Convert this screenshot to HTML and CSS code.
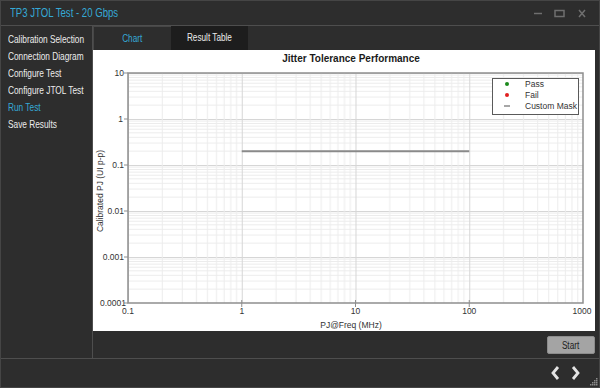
FILE: index.html
```html
<!DOCTYPE html>
<html lang="en">
<head>
    <meta charset="UTF-8">
    <title>TP3 JTOL Test - 20 Gbps</title>
    <link rel="stylesheet" href="styles.css">
</head>
<body>
    <div class="window">
        <div class="titlebar">
            <span class="title"><span class="narrow">TP3 JTOL Test - 20 Gbps</span></span>
            <svg class="win-controls" width="60" height="24" viewBox="0 0 60 24">
                <line x1="3" y1="12.5" x2="11" y2="12.5" stroke="#6f6f6f" stroke-width="1.5"/>
                <rect x="24" y="9.5" width="9" height="6" fill="none" stroke="#6f6f6f" stroke-width="1.5"/>
                <path d="M48 9 L54 16 M54 9 L48 16" stroke="#6f6f6f" stroke-width="1.5"/>
            </svg>
        </div>

        <div class="content">
            <nav class="sidebar">
                <div class="nav-item"><span class="narrow">Calibration Selection</span></div>
                <div class="nav-item"><span class="narrow">Connection Diagram</span></div>
                <div class="nav-item"><span class="narrow">Configure Test</span></div>
                <div class="nav-item"><span class="narrow">Configure JTOL Test</span></div>
                <div class="nav-item active"><span class="narrow">Run Test</span></div>
                <div class="nav-item"><span class="narrow">Save Results</span></div>
            </nav>

            <div class="main">
                <div class="tabs">
                    <div class="tab active"><span class="narrow">Chart</span></div>
                    <div class="tab"><span class="narrow">Result Table</span></div>
                </div>

                <div class="chart-panel">
                    <svg class="chart" width="502" height="281" viewBox="0 0 502 281">
                        <defs>
                            <pattern id="grid-x" x="35" y="0" width="113.75" height="281" patternUnits="userSpaceOnUse">
                                <g stroke="#ececec" stroke-width="1">
                                    <line x1="34.24" y1="0" x2="34.24" y2="281"/>
                                    <line x1="54.27" y1="0" x2="54.27" y2="281"/>
                                    <line x1="68.48" y1="0" x2="68.48" y2="281"/>
                                    <line x1="79.51" y1="0" x2="79.51" y2="281"/>
                                    <line x1="88.51" y1="0" x2="88.51" y2="281"/>
                                    <line x1="96.13" y1="0" x2="96.13" y2="281"/>
                                    <line x1="102.73" y1="0" x2="102.73" y2="281"/>
                                    <line x1="108.54" y1="0" x2="108.54" y2="281"/>
                                </g>
                                <line x1="0.5" y1="0" x2="0.5" y2="281" stroke="#d6d6d6"/>
                            </pattern>
                            <pattern id="grid-y" x="0" y="23" width="502" height="46" patternUnits="userSpaceOnUse">
                                <g stroke="#ececec" stroke-width="1">
                                    <line x1="0" y1="2.10" x2="502" y2="2.10"/>
                                    <line x1="0" y1="4.46" x2="502" y2="4.46"/>
                                    <line x1="0" y1="7.13" x2="502" y2="7.13"/>
                                    <line x1="0" y1="10.21" x2="502" y2="10.21"/>
                                    <line x1="0" y1="13.85" x2="502" y2="13.85"/>
                                    <line x1="0" y1="18.31" x2="502" y2="18.31"/>
                                    <line x1="0" y1="24.05" x2="502" y2="24.05"/>
                                    <line x1="0" y1="32.15" x2="502" y2="32.15"/>
                                </g>
                                <line x1="0" y1="0.5" x2="502" y2="0.5" stroke="#d6d6d6"/>
                            </pattern>
                        </defs>

                        <text class="chart-title" x="258" y="12" text-anchor="middle">Jitter Tolerance Performance</text>

                        <!-- grid -->
                        <rect x="35" y="23" width="455" height="230" fill="url(#grid-y)"/>
                        <rect x="35" y="23" width="455" height="230" fill="url(#grid-x)"/>

                        <!-- custom mask -->
                        <line x1="148.75" y1="101.2" x2="376.25" y2="101.2" stroke="#8a8a8a" stroke-width="2"/>

                        <rect x="35" y="23" width="455" height="230" fill="none" stroke="#8e8e8e" stroke-width="1.5"/>

                        <!-- ticks -->
                        <g stroke="#8e8e8e" stroke-width="1">
                            <line x1="31" y1="23" x2="35" y2="23"/>
                            <line x1="31" y1="69" x2="35" y2="69"/>
                            <line x1="31" y1="115" x2="35" y2="115"/>
                            <line x1="31" y1="161" x2="35" y2="161"/>
                            <line x1="31" y1="207" x2="35" y2="207"/>
                            <line x1="31" y1="253" x2="35" y2="253"/>
                            <line x1="148.75" y1="250" x2="148.75" y2="257"/>
                            <line x1="262.5" y1="250" x2="262.5" y2="257"/>
                            <line x1="376.25" y1="250" x2="376.25" y2="257"/>
                        </g>

                        <g class="tick-label" text-anchor="end">
                            <text x="31" y="23">10</text>
                            <text x="30" y="69">1</text>
                            <text x="31" y="115">0.1</text>
                            <text x="31" y="161">0.01</text>
                            <text x="31" y="207">0.001</text>
                            <text x="33" y="253">0.0001</text>
                        </g>
                        <g class="tick-label" text-anchor="middle">
                            <text x="35" y="261">0.1</text>
                            <text x="148.75" y="261">1</text>
                            <text x="262.5" y="261">10</text>
                            <text x="376.25" y="261">100</text>
                            <text x="489" y="261">1000</text>
                        </g>

                        <text class="axis-label" x="258" y="275" text-anchor="middle">PJ@Freq (MHz)</text>
                        <text class="axis-label" transform="translate(7,141) rotate(-90)" text-anchor="middle">Calibrated PJ (UI p-p)</text>

                        <!-- legend -->
                        <rect x="399.5" y="28.5" width="86" height="36" fill="#fff" stroke="#5a5a5a" stroke-width="1"/>
                        <circle cx="414" cy="34" r="2" fill="#1c8a1c"/>
                        <circle cx="414" cy="45" r="2" fill="#e02020"/>
                        <line x1="411" y1="56" x2="417" y2="56" stroke="#8a8a8a" stroke-width="1.5"/>
                        <g class="legend-label">
                            <text x="432" y="34">Pass</text>
                            <text x="432" y="45">Fail</text>
                            <text x="432" y="56">Custom Mask</text>
                        </g>
                    </svg>
                </div>

                <div class="actions">
                    <button class="start-btn"><span class="narrow">Start</span></button>
                </div>
            </div>
        </div>

        <div class="footer">
            <svg class="nav-arrows" width="32" height="16" viewBox="0 0 32 16">
                <polyline points="8,2 3,8 8,14" fill="none" stroke="#e4e4e4" stroke-width="2.8"/>
                <polyline points="23,2 28,8 23,14" fill="none" stroke="#e4e4e4" stroke-width="2.8"/>
            </svg>
        </div>

        <svg class="grip" width="8" height="8" viewBox="0 0 8 8">
            <g fill="#8a8a8a">
                <rect x="6" y="0" width="1.5" height="1.5"/>
                <rect x="4" y="2" width="1.5" height="1.5"/>
                <rect x="6" y="2" width="1.5" height="1.5"/>
                <rect x="2" y="4" width="1.5" height="1.5"/>
                <rect x="4" y="4" width="1.5" height="1.5"/>
                <rect x="6" y="4" width="1.5" height="1.5"/>
                <rect x="0" y="6" width="1.5" height="1.5"/>
                <rect x="2" y="6" width="1.5" height="1.5"/>
                <rect x="4" y="6" width="1.5" height="1.5"/>
                <rect x="6" y="6" width="1.5" height="1.5"/>
            </g>
        </svg>
    </div>
</body>
</html>
```

FILE: styles.css
```css
:root {
    --bg-dark: #2d2d2d;
    --bg-darker: #1d1d1d;
    --line: #4e4e4e;
    --accent: #35a9d6;
    --text-light: #ececec;
}

* {
    box-sizing: border-box;
    margin: 0;
    padding: 0;
}

body {
    font-family: "Liberation Sans", Arial, sans-serif;
    background-color: var(--bg-dark);
}

/* the UI font is a condensed face; squeeze Liberation Sans to its width */
.narrow {
    display: inline-block;
    white-space: nowrap;
    transform: scaleX(0.82);
    transform-origin: left center;
}

.window {
    position: relative;
    width: 600px;
    height: 388px;
    background-color: var(--bg-dark);
    border: 1px solid #454545;
    display: flex;
    flex-direction: column;
    color: var(--text-light);
}

.titlebar {
    height: 25px;
    flex: none;
    display: flex;
    align-items: center;
    justify-content: space-between;
    padding-left: 9px;
    padding-right: 8px;
    border-bottom: 1px solid var(--line);
}

.title {
    color: var(--accent);
    font-size: 12px;
}

.title .narrow {
    transform: scaleX(0.8);
}

.win-controls {
    display: block;
}

.content {
    height: 332px;
    flex: none;
    display: flex;
}

.sidebar {
    width: 92px;
    flex: none;
    border-right: 1px solid var(--line);
    padding: 5px 0 0 7px;
}

.nav-item {
    font-size: 10.5px;
    line-height: 17px;
    white-space: nowrap;
}

.nav-item .narrow {
    transform: scaleX(0.79);
}

.nav-item.active {
    color: var(--accent);
}

.main {
    flex: 1;
    display: flex;
    flex-direction: column;
}

.tabs {
    height: 24px;
    flex: none;
    display: flex;
}

.tab {
    width: 77px;
    font-size: 10px;
    line-height: 24px;
    text-align: center;
    background-color: var(--bg-darker);
}

.tab .narrow,
.start-btn .narrow {
    transform-origin: center center;
}

.tab.active {
    width: 78px;
    color: var(--accent);
    background-color: var(--bg-dark);
    border-left: 1px solid #474747;
    border-top: 1px solid #474747;
    line-height: 23px;
}

.chart-panel {
    height: 281px;
    flex: none;
    margin-right: 4px;
    background-color: #fff;
}

.chart {
    display: block;
    font-family: "Liberation Sans", Arial, sans-serif;
}

.chart-title {
    font-size: 10px;
    font-weight: bold;
    fill: #1a1a1a;
}

.tick-label text,
.legend-label text {
    font-size: 8.5px;
    fill: #333;
    dominant-baseline: central;
}

.axis-label {
    font-size: 8.5px;
    fill: #333;
    dominant-baseline: central;
}

.actions {
    flex: 1;
    display: flex;
    justify-content: flex-end;
    align-items: flex-start;
    padding: 5px 4px 0 0;
}

.start-btn {
    width: 48px;
    height: 18px;
    font-family: inherit;
    font-size: 10px;
    color: #1c1c1c;
    background-color: #a4a4a4;
    border: 1px solid #8c8c8c;
    border-radius: 2px;
    cursor: pointer;
}

.footer {
    flex: 1;
    display: flex;
    justify-content: flex-end;
    align-items: center;
    padding-right: 17px;
    border-top: 1px solid var(--line);
}

.nav-arrows {
    display: block;
}

.grip {
    position: absolute;
    right: 1px;
    bottom: 1px;
}
```
